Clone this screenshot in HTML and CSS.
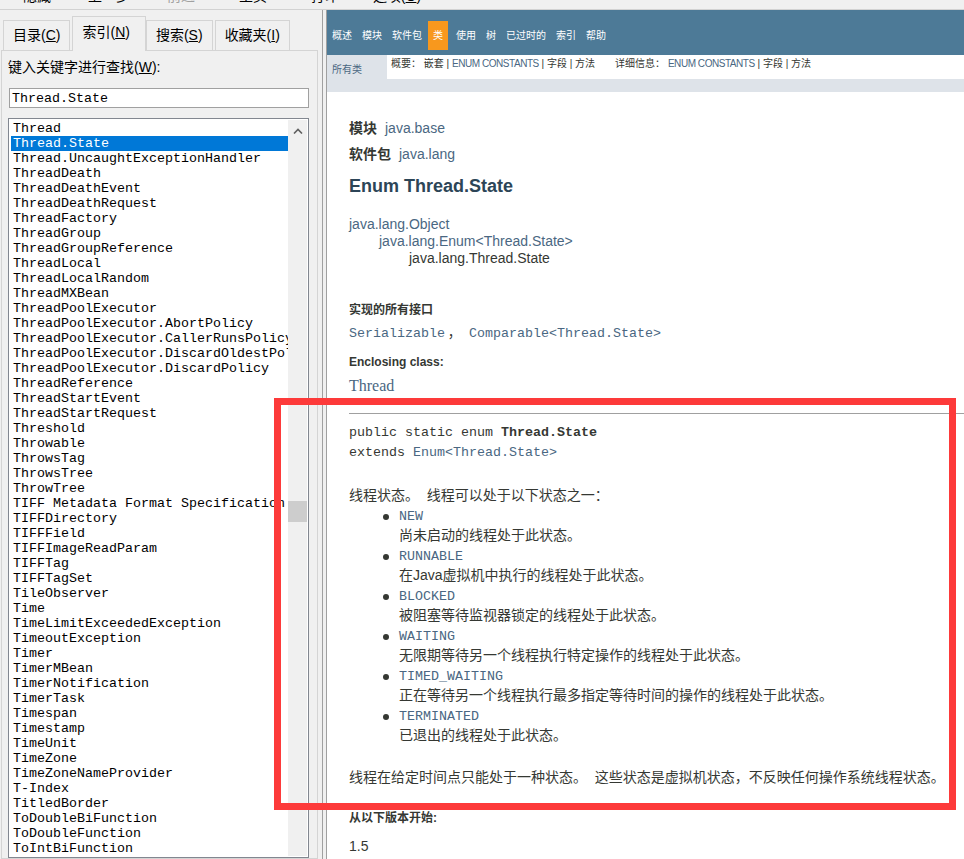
FILE: index.html
```html
<!DOCTYPE html>
<html lang="zh-CN">
<head>
<meta charset="utf-8">
<title>Enum Thread.State</title>
<link rel="stylesheet" href="styles.css">
</head>
<body>
<div class="toolbar">
  <span class="tb-btn">隐藏</span>
  <span class="tb-btn">上一步</span>
  <span class="tb-btn disabled">前进</span>
  <span class="tb-btn">主页</span>
  <span class="tb-btn">打印</span>
  <span class="tb-btn">选项(<u>O</u>)</span>
</div>
<div class="main">
  <aside class="left">
    <div class="tabs">
      <div class="tab">目录(<u>C</u>)</div>
      <div class="tab active">索引(<u>N</u>)</div>
      <div class="tab">搜索(<u>S</u>)</div>
      <div class="tab">收藏夹(<u>I</u>)</div>
    </div>
    <div class="panel">
      <div class="kw-label">键入关键字进行查找(<u>W</u>):</div>
      <div class="kw-input">Thread.State</div>
      <div class="listbox">
        <ul class="items">
          <li>Thread</li>
          <li class="sel">Thread.State</li>
          <li>Thread.UncaughtExceptionHandler</li>
          <li>ThreadDeath</li>
          <li>ThreadDeathEvent</li>
          <li>ThreadDeathRequest</li>
          <li>ThreadFactory</li>
          <li>ThreadGroup</li>
          <li>ThreadGroupReference</li>
          <li>ThreadLocal</li>
          <li>ThreadLocalRandom</li>
          <li>ThreadMXBean</li>
          <li>ThreadPoolExecutor</li>
          <li>ThreadPoolExecutor.AbortPolicy</li>
          <li>ThreadPoolExecutor.CallerRunsPolicy</li>
          <li>ThreadPoolExecutor.DiscardOldestPolicy</li>
          <li>ThreadPoolExecutor.DiscardPolicy</li>
          <li>ThreadReference</li>
          <li>ThreadStartEvent</li>
          <li>ThreadStartRequest</li>
          <li>Threshold</li>
          <li>Throwable</li>
          <li>ThrowsTag</li>
          <li>ThrowsTree</li>
          <li>ThrowTree</li>
          <li>TIFF Metadata Format Specification</li>
          <li>TIFFDirectory</li>
          <li>TIFFField</li>
          <li>TIFFImageReadParam</li>
          <li>TIFFTag</li>
          <li>TIFFTagSet</li>
          <li>TileObserver</li>
          <li>Time</li>
          <li>TimeLimitExceededException</li>
          <li>TimeoutException</li>
          <li>Timer</li>
          <li>TimerMBean</li>
          <li>TimerNotification</li>
          <li>TimerTask</li>
          <li>Timespan</li>
          <li>Timestamp</li>
          <li>TimeUnit</li>
          <li>TimeZone</li>
          <li>TimeZoneNameProvider</li>
          <li>T-Index</li>
          <li>TitledBorder</li>
          <li>ToDoubleBiFunction</li>
          <li>ToDoubleFunction</li>
          <li>ToIntBiFunction</li>
          <li>ToIntFunction</li>
        </ul>
        <div class="vscroll">
          <svg class="up" width="10" height="6" viewBox="0 0 10 6"><path d="M1 5.5 L5 1.5 L9 5.5" fill="none" stroke="#606060" stroke-width="1.6"/></svg>
          <div class="thumb"></div>
        </div>
      </div>
    </div>
  </aside>
  <div class="splitter"></div>
  <main class="right">
    <div class="topnav">
      <ul class="navlist">
        <li>概述</li>
        <li>模块</li>
        <li>软件包</li>
        <li class="current">类</li>
        <li>使用</li>
        <li>树</li>
        <li>已过时的</li>
        <li>索引</li>
        <li>帮助</li>
      </ul>
    </div>
    <div class="subnav">
      <div class="allclasses">所有类</div>
      <div class="subnav-box">
        <div class="group">概要：&nbsp;嵌套 | <span class="link">ENUM CONSTANTS</span> | 字段 | 方法</div>
        <div class="group">详细信息：&nbsp;<span class="link">ENUM CONSTANTS</span> | 字段 | 方法</div>
      </div>
    </div>
    <div class="strip"></div>
    <div class="content">
      <div class="meta-line"><span class="label-b">模块</span><span class="link">java.base</span></div>
      <div class="meta-line second"><span class="label-b">软件包</span><span class="link">java.lang</span></div>
      <h2 class="title">Enum Thread.State</h2>
      <div class="inherit">
        <div class="link">java.lang.Object</div>
        <div class="l2 link">java.lang.Enum&lt;Thread.State&gt;</div>
        <div class="l3">java.lang.Thread.State</div>
      </div>
      <div class="dt first">实现的所有接口</div>
      <div class="dd-code"><span class="link">Serializable</span>&thinsp;， <span class="link">Comparable&lt;Thread.State&gt;</span></div>
      <div class="dt">Enclosing class:</div>
      <div class="dd-serif link">Thread</div>
      <hr class="rule">
      <div class="sig">public static enum <b>Thread.State</b></div>
      <div class="sig next">extends <span class="link">Enum&lt;Thread.State&gt;</span></div>
      <p class="desc-p">线程状态。&nbsp; 线程可以处于以下状态之一：</p>
      <ul class="states">
        <li><span class="bullet"></span><div><div class="state-code link">NEW</div><div class="state-desc">尚未启动的线程处于此状态。</div></div></li>
        <li><span class="bullet"></span><div><div class="state-code link">RUNNABLE</div><div class="state-desc">在Java虚拟机中执行的线程处于此状态。</div></div></li>
        <li><span class="bullet"></span><div><div class="state-code link">BLOCKED</div><div class="state-desc">被阻塞等待监视器锁定的线程处于此状态。</div></div></li>
        <li><span class="bullet"></span><div><div class="state-code link">WAITING</div><div class="state-desc">无限期等待另一个线程执行特定操作的线程处于此状态。</div></div></li>
        <li><span class="bullet"></span><div><div class="state-code link">TIMED_WAITING</div><div class="state-desc">正在等待另一个线程执行最多指定等待时间的操作的线程处于此状态。</div></div></li>
        <li><span class="bullet"></span><div><div class="state-code link">TERMINATED</div><div class="state-desc">已退出的线程处于此状态。</div></div></li>
      </ul>
      <p class="end-p">线程在给定时间点只能处于一种状态。&nbsp; 这些状态是虚拟机状态，不反映任何操作系统线程状态。</p>
      <div class="dt since">从以下版本开始:</div>
      <div class="since-dd">1.5</div>
    </div>
  </main>
</div>
<div class="annot"></div>
</body>
</html>
```
FILE: styles.css
```css
html, body {
  margin: 0;
  padding: 0;
}
body {
  width: 964px;
  height: 859px;
  overflow: hidden;
  background: #f0f0f0;
  font-family: "Liberation Sans", "Noto Sans CJK SC", sans-serif;
  color: #000;
  position: relative;
}

/* toolbar (cut off at top) */
.toolbar {
  height: 9px;
  border-bottom: 1px solid #d2d2d2;
  display: flex;
  overflow: hidden;
  padding-left: 1px;
}
.tb-btn {
  flex: none;
  width: 72px;
  text-align: center;
  font-size: 14px;
  line-height: 14px;
  margin-top: -11px;
  height: 20px;
}
.tb-btn.disabled { color: #a0a0a0; }

.main {
  display: flex;
  height: 849px;
}

/* left help pane */
.left {
  width: 318px;
  flex: none;
  display: flex;
  flex-direction: column;
}
.tabs {
  height: 40px;
  display: flex;
  align-items: flex-end;
  padding-left: 3px;
  position: relative;
  z-index: 1;
}
.tab {
  height: 30px;
  box-sizing: border-box;
  padding: 0 9px;
  border: 1px solid #d4d4d4;
  border-bottom: none;
  background: #f0f0f0;
  font-size: 14px;
  line-height: 29px;
  margin-right: 2px;
  white-space: nowrap;
}
.tab.active {
  height: 35px;
  margin-bottom: -1px;
  padding-right: 15px;
  margin-right: 0;
  line-height: 31px;
  border-color: #d4d4d4;
}
.panel {
  flex: 1;
  min-height: 0;
  margin-left: 1px;
  width: 317px;
  box-sizing: border-box;
  border: 1px solid #d4d4d4;
  padding: 7px 0 0 6px;
  display: flex;
  flex-direction: column;
}
.kw-label {
  font-size: 14px;
  line-height: 18px;
}
.kw-input {
  margin: 12px 0 0 1px;
  width: 300px;
  height: 20px;
  box-sizing: border-box;
  border: 1px solid #a0a0a0;
  background: #fff;
  font-family: "Liberation Mono", monospace;
  font-size: 13.33px;
  line-height: 19px;
  padding-left: 2px;
}
.listbox {
  margin-top: 10px;
  width: 301px;
  box-sizing: border-box;
  flex: 1;
  min-height: 0;
  border: 1px solid #828790;
  padding: 1px;
  background: #fff;
  display: flex;
}
.items {
  flex: 1;
  min-width: 0;
  margin: 0;
  padding: 1px 0 0 1px;
  list-style: none;
  overflow: hidden;
}
.items li {
  height: 15px;
  line-height: 16px;
  padding-left: 2px;
  white-space: nowrap;
  overflow: hidden;
  font-family: "Liberation Mono", monospace;
  font-size: 13.33px;
  color: #000;
}
.items li.sel {
  background: #0078d7;
  color: #fff;
}
.vscroll {
  width: 19px;
  flex: none;
  background: #f0f0f0;
  display: flex;
  flex-direction: column;
  align-items: center;
}
.vscroll .up {
  margin-top: 8px;
  display: block;
}
.thumb {
  width: 19px;
  height: 21px;
  margin-top: 367px;
  background: #cdcdcd;
}

.splitter {
  width: 4px;
  flex: none;
  border-right: 1px solid #a0a0a0;
  margin-right: 3px;
}

/* right javadoc pane */
.right {
  flex: 1;
  min-width: 0;
  border-left: 1px solid #a0a0a0;
  background: #fff;
  display: flex;
  flex-direction: column;
  color: #353833;
  font-family: "Liberation Sans", "Noto Sans CJK SC", sans-serif;
}
.link { color: #4a6782; }

.topnav {
  background: #4d7a97;
  padding: 11px 0 5px;
}
.navlist {
  display: flex;
  margin: 0;
  padding: 0;
  list-style: none;
}
.navlist li {
  padding: 0 5px;
  font-size: 10px;
  line-height: 29px;
  color: #fff;
  white-space: nowrap;
}
.navlist li.current {
  background: #f8981d;
  margin-left: 1px;
  margin-right: 3px;
}

.subnav {
  display: flex;
  height: 24px;
  background: #dee3e9;
}
.allclasses {
  width: 60px;
  flex: none;
  box-sizing: border-box;
  padding: 6px 0 0 5px;
  font-size: 10px;
  line-height: 17px;
  color: #4a6782;
}
.subnav-box {
  flex: 1;
  background: #fff;
  padding: 1px 4px;
  font-size: 10px;
  line-height: 15px;
  display: flex;
  white-space: nowrap;
}
.subnav-box .link { letter-spacing: -0.45px; }
.subnav-box .group + .group { margin-left: 20px; }

.strip {
  height: 13px;
  background: #dee3e9;
}

.content {
  flex: 1;
  padding: 26px 0 0 22px;
}
.meta-line {
  font-size: 14px;
  line-height: 20px;
}
.meta-line.second { margin-top: 6px; }
.label-b {
  font-weight: bold;
  margin-right: 8px;
}
.title {
  margin: 10px 0 0;
  font-size: 18px;
  line-height: 24px;
  font-weight: bold;
  color: #2c4557;
}
.inherit {
  margin-top: 18px;
  font-size: 14px;
  line-height: 17px;
}
.inherit .l2 { padding-left: 30px; }
.inherit .l3 { padding-left: 60px; }
.dt {
  font-size: 12px;
  font-weight: bold;
  line-height: 16px;
  margin-top: 11px;
}
.dt.first { margin-top: 35px; }
.dd-code {
  margin-top: 7px;
  font-family: "Liberation Mono", "Noto Sans CJK SC", monospace;
  font-size: 13.33px;
  line-height: 18px;
}
.dd-serif {
  margin-top: 7px;
  font-family: "Liberation Serif", serif;
  font-size: 16px;
  line-height: 18px;
}
.rule {
  margin: 18px 0 0;
  border: 0;
  border-top: 1px solid #a0a0a0;
  height: 0;
}
.sig {
  margin-top: 9px;
  font-family: "Liberation Mono", monospace;
  font-size: 13.33px;
  line-height: 20px;
}
.sig.next { margin-top: 0; }
.desc-p {
  margin: 22px 0 0;
  font-size: 14px;
  line-height: 20px;
}
.states {
  margin: 2px 0 0;
  padding-left: 34px;
  list-style: none;
}
.states li {
  display: flex;
  margin-bottom: 2px;
}
.bullet {
  flex: none;
  width: 6px;
  height: 6px;
  border-radius: 50%;
  background: #353833;
  margin: 7px 10px 0 0;
}
.state-code {
  font-family: "Liberation Mono", monospace;
  font-size: 13.33px;
  line-height: 19px;
}
.state-desc {
  font-size: 14px;
  line-height: 19px;
}
.end-p {
  margin: 22px 0 0;
  font-size: 14px;
  line-height: 20px;
  white-space: nowrap;
}
.dt.since { margin-top: 23px; }
.since-dd {
  margin-top: 11px;
  font-size: 14px;
  line-height: 18px;
}

/* red annotation rectangle drawn over the screenshot */
.annot {
  position: absolute;
  left: 274px;
  top: 398px;
  width: 682px;
  height: 412px;
  box-sizing: border-box;
  border: 7px solid #fd3a3a;
  pointer-events: none;
}
```
